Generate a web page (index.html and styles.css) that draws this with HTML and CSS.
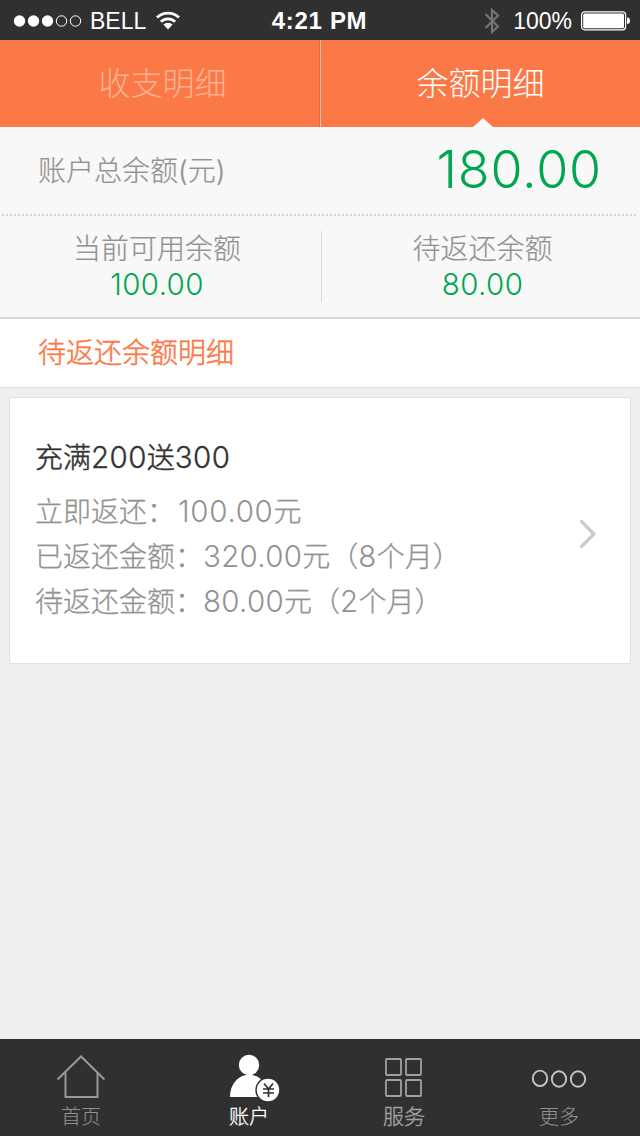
FILE: index.html
```
<!DOCTYPE html>
<html lang="zh-CN">

<head>
	<meta charset="utf-8">
	<title>余额明细</title>
	<meta name="viewport" content="width=device-width, initial-scale=1.0">
	<link rel="stylesheet" href="styles.css">
</head>

<body>
	<header class="status-bar">
		<div class="status-left">
			<svg class="signal" width="70" height="14" viewBox="0 0 70 14">
				<g fill="#fff">
					<circle cx="6.5" cy="7" r="5.7"/>
					<circle cx="20.5" cy="7" r="5.7"/>
					<circle cx="34.5" cy="7" r="5.7"/>
				</g>
				<g fill="none" stroke="#fff">
					<circle cx="48.5" cy="7" r="5.2"/>
					<circle cx="62.5" cy="7" r="5.2"/>
				</g>
			</svg>
			<span class="carrier">BELL</span>
			<svg class="wifi" width="24" height="19" viewBox="0 0 24 19">
				<g fill="none" stroke="#fff" stroke-width="2.8">
					<path d="M1 6.6a15.6 15.6 0 0 1 22 0"/>
					<path d="M4.9 10.8a10 10 0 0 1 14.2 0"/>
				</g>
				<path d="M12 18.5L7.4 13.6a6.6 6.6 0 0 1 9.2 0z" fill="#fff"/>
			</svg>
		</div>
		<div class="clock">4:21 PM</div>
		<div class="status-right">
			<svg class="bluetooth" width="16" height="28" viewBox="0 0 16 28">
				<path d="M1.5 7L14 19.5L8 25V3L14 8.5L1.5 21" fill="none" stroke="#747474" stroke-width="2.2"/>
			</svg>
			<span class="percent">100%</span>
			<svg class="battery" width="50" height="20" viewBox="0 0 50 20">
				<rect x="0.6" y="0.8" width="44" height="18" rx="3" fill="none" stroke="#fff" stroke-width="1.2"/>
				<rect x="2.2" y="2.4" width="40.8" height="14.8" rx="1.5" fill="#fff"/>
				<path d="M46 6.5a3 3.3 0 0 1 0 6.6z" fill="#fff"/>
			</svg>
		</div>
	</header>

	<nav class="tabs">
		<a class="tab">收支明细</a>
		<a class="tab active">余额明细</a>
	</nav>

	<section class="summary">
		<div class="total">
			<span class="label">账户总余额(元)</span>
			<span class="total-num">180.00</span>
		</div>
		<svg class="dots" width="640" height="2" viewBox="0 0 640 2">
			<path d="M2 1H638" stroke="#c6c6c6" stroke-width="1.5" stroke-dasharray="2 2"/>
		</svg>
		<div class="parts">
			<div class="part">
				<div class="label">当前可用余额</div>
				<div class="num">100.00</div>
			</div>
			<div class="part">
				<div class="label">待返还余额</div>
				<div class="num">80.00</div>
			</div>
		</div>
	</section>

	<h2 class="list-title">待返还余额明细</h2>

	<main class="list">
		<a class="card">
			<div class="card-text">
				<h3>充满<b>200</b>送<b>300</b></h3>
				<p>立即返还：<b class="instant">100.00</b>元</p>
				<p>已返还金额：<b>320.00</b>元（<b>8</b>个月）</p>
				<p>待返还金额：<b>80.00</b>元（<b>2</b>个月）</p>
			</div>
			<svg class="arrow" width="18" height="30" viewBox="0 0 18 30">
				<path d="M2.5 2.5L15 15L2.5 27.5" fill="none" stroke="#cbcbcb" stroke-width="3.2" stroke-linecap="round"/>
			</svg>
		</a>
	</main>

	<!-- bottom bar -->
	<footer class="tabbar">
		<a class="item home">
			<svg width="50" height="50" viewBox="0 0 50 50" fill="none" stroke="#989898" stroke-width="2">
				<path d="M1.500 26.500L25 3.500L48.500 26.500"/>
				<path d="M9.500 19.500V44H41.500V19.500"/>
			</svg>
			<span>首页</span>
		</a>
		<a class="item account">
			<svg width="50" height="50" viewBox="0 0 50 50">
				<circle cx="19" cy="12" r="10.2" fill="#fff"/>
				<path d="M0 44C0 31 8 24 14 22.5C17 21 21 21 24 22.5C31 24 38 31 38 44z" fill="#fff"/>
				<circle cx="38" cy="37" r="12.7" fill="#303030"/>
				<circle cx="38" cy="37" r="11.2" fill="#fff"/>
				<path d="M34 30.5L38.5 36L43 30.5M38.5 36V44M33 36H44M33 40H44" fill="none" stroke="#303030" stroke-width="1.7"/>
			</svg>
			<span>账户</span>
		</a>
		<a class="item service">
			<svg width="50" height="50" viewBox="0 0 50 50" fill="none" stroke="#a0a0a0" stroke-width="1.8">
				<rect x="7" y="6" width="15" height="16" rx="1"/>
				<rect x="27" y="6" width="15" height="16" rx="1"/>
				<rect x="7" y="27" width="15" height="16" rx="1"/>
				<rect x="27" y="27" width="15" height="16" rx="1"/>
			</svg>
			<span>服务</span>
		</a>
		<a class="item more">
			<svg width="56" height="50" viewBox="0 0 56 50" fill="none" stroke="#c4c4c4" stroke-width="1.9">
				<ellipse cx="9" cy="25.3" rx="7.2" ry="7.7"/>
				<ellipse cx="28" cy="26" rx="7.2" ry="7.7"/>
				<ellipse cx="47" cy="26" rx="7.2" ry="7.7"/>
			</svg>
			<span>更多</span>
		</a>
	</footer>
</body>

</html>
```
FILE: styles.css
```
* {
	box-sizing: border-box;
}

body {
	margin: 0;
	width: 640px;
	height: 1136px;
	display: flex;
	flex-direction: column;
	overflow: hidden;
	background: #efefef;
	font-family: Inter, "Noto Sans CJK SC", sans-serif;
	font-weight: 300;
	color: #929292;
}

svg {
	display: block;
	flex: none;
}

h2, h3, p {
	margin: 0;
	font-weight: inherit;
}

/* status bar */

.status-bar {
	height: 40px;
	display: grid;
	grid-template-columns: 1fr auto 1fr;
	align-items: center;
	padding: 0 10px 0 13px;
	background: #303030;
	color: #fff;
	font: 24px/40px "Liberation Sans", Arial, sans-serif;
}

.status-left,
.status-right {
	display: flex;
	align-items: center;
}

.status-right {
	justify-content: flex-end;
}

.carrier {
	margin: 1px 10px 0 7px;
	font-size: 23px;
}

.clock {
	margin-left: -4px;
	letter-spacing: 0.7px;
	font-weight: bold;
}

.percent {
	margin: 1px 9px 0 13px;
	font-size: 23px;
}

.battery {
	margin-right: -1px;
}

/* top tabs */

.tabs {
	display: flex;
	height: 87px;
	background: #fb7847;
}

.tab {
	position: relative;
	width: 320px;
	padding: 0 0 0 6px;
	border-right: 1px solid #e06a3d;
	text-align: center;
	font-size: 32px;
	line-height: 88px;
	color: #fdb294;
}

.tab.active {
	border-left: 1px solid #fdbb9f;
	border-right: 0;
	padding-left: 0;
	color: #fff;
}

/* little notch that points at the open tab */
.tab.active::after {
	content: "";
	position: absolute;
	left: 152px;
	bottom: 0;
	border: 10px solid transparent;
	border-top: 0;
	border-bottom: 9px solid #f8f8f8;
}

/* balance */

.summary {
	height: 192px;
	background: #f8f8f8;
	border-bottom: 2px solid #d9d9d9;
}

.total {
	display: flex;
	justify-content: space-between;
	height: 87px;
	padding: 0 38px;
	line-height: 86px;
}

.label {
	font-size: 28px;
	-webkit-text-stroke: 0.2px;
}

.total .label {
	padding-top: 1px;
}

.total-num {
	font-size: 52px;
	letter-spacing: 0.8px;
	color: #00a651;
}

.parts {
	display: flex;
	padding-top: 15px;
}

.part {
	width: 321px;
	height: 71px;
	padding-right: 7px;
	text-align: center;
	line-height: 36px;
}

.part + .part {
	width: 319px;
	border-left: 1px solid #d8d8d8;
	padding: 0 0 0 3px;
}

.num {
	margin-top: -1px;
	font-size: 29.5px;
	letter-spacing: 0.4px;
	color: #00a651;
}

.list-title {
	height: 69px;
	padding-left: 38px;
	background: #fff;
	border-bottom: 1px solid #dedede;
	font-size: 28px;
	line-height: 68px;
	color: #fb7847;
	-webkit-text-stroke: 0.5px;
}

.list {
	flex: 1;
	padding: 9px;
}

.card {
	display: flex;
	align-items: center;
	justify-content: space-between;
	height: 267px;
	padding: 0 33px 0 25px;
	background: #fff;
	border: 1px solid #e2e2e2;
	font-size: 28px;
	line-height: 45px;
}

.card p {
	height: 45px;
	-webkit-text-stroke: 0.3px;
}

.card h3 {
	height: 45px;
	margin-bottom: 9px;
	font-size: 28px;
	color: #333;
	-webkit-text-stroke: 0.5px;
}

/* digits run a bit larger than the hanzi */
.card b {
	font-size: 29.5px;
	line-height: 1;
	letter-spacing: 0.3px;
	font-weight: inherit;
	-webkit-text-stroke: 0;
}

.card h3 b {
	font-size: 29.5px;
	letter-spacing: 0.4px;
	-webkit-text-stroke: 0.3px;
}

.card .instant {
	padding-left: 3px;
	letter-spacing: 0.7px;
}

.arrow {
	margin-top: 6px;
}

/* bottom bar */

.tabbar {
	display: flex;
	height: 97px;
	background: #303030;
	font-size: 20px;
	line-height: 28px;
}

.item {
	width: 162px;
	padding-top: 14px;
	display: flex;
	flex-direction: column;
	align-items: center;
}

.account {
	width: 174px;
	color: #fff;
	-webkit-text-stroke: 0.3px;
}

.account svg {
	margin-left: 12px;
}

.service {
	width: 136px;
	font-size: 21px;
	color: #a0a0a0;
	-webkit-text-stroke: 0.4px;
}

.more {
	width: 168px;
	padding-left: 6px;
}
```
